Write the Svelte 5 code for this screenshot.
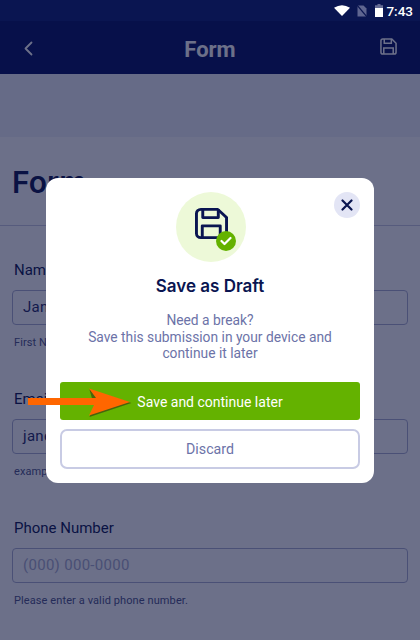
<script>
  const fields = [
    { label: 'Name', value: 'Jane', help: 'First Name' },
    { label: 'Email', value: 'jane@example.com', help: 'example@example.com' },
    { label: 'Phone Number', placeholder: '(000) 000-0000', help: 'Please enter a valid phone number.' }
  ];
</script>

<div class="screen">
  <div class="status">
    <svg width="16" height="11" viewBox="0 0 16 11"><path d="M0 2.8 Q8 -2.4 16 2.8 L8 11Z" fill="#fff"/></svg>
    <svg class="sim" width="10" height="12" viewBox="0 0 10 12"><path d="M0.5 0.5H6.5L9.5 3.5V11.5H0.5Z" fill="#5f6590"/><path d="M0 0L10 12" stroke="#0a1551" stroke-width="1.2"/></svg>
    <svg class="bat" width="8" height="13" viewBox="0 0 8 13"><path d="M2.5 0H5.5V1.2H8V4H0V1.2H2.5Z" fill="#666c95"/><rect y="4" width="8" height="9" fill="#fff"/></svg>
    <span class="time">7:43</span>
  </div>
  <div class="app">
    <header>
      <svg width="12" height="16" viewBox="0 0 12 16" fill="none"><path d="M9.5 2.5L3.5 8.5L9.5 14.5" stroke="#fff" stroke-width="1.8" stroke-linecap="round" stroke-linejoin="round"/></svg>
      <span class="head-title">Form</span>
      <svg class="head-save" width="17" height="17" viewBox="0 0 18 18" fill="none" stroke="#fff" stroke-width="1.6"><path d="M3 1H12.5L17 5.5V15A2 2 0 0 1 15 17H3A2 2 0 0 1 1 15V3A2 2 0 0 1 3 1Z"/><path d="M4.5 1V5.5H12V1M4 17V10.5H14V17"/></svg>
    </header>
    <div class="band"></div>
    <main>
      <h1>Form</h1>
      <div class="fields">
        {#each fields as f}
          <div class="field">
            <span class="label">{f.label}</span>
            <div class="input" class:placeholder={f.placeholder}>{f.value ?? f.placeholder}</div>
            <span class="help">{f.help}</span>
          </div>
        {/each}
      </div>
    </main>
    <div class="overlay">
      <div class="modal">
        <button class="close" aria-label="Close">
          <svg width="12" height="12" viewBox="0 0 12 12"><path d="M1.5 1.5L10.5 10.5M10.5 1.5L1.5 10.5" stroke="#0a1551" stroke-width="2.2" stroke-linecap="round"/></svg>
        </button>
        <div class="badge">
          <svg width="33" height="31" viewBox="0 0 34 34" preserveAspectRatio="none" fill="none" stroke="#0a1551" stroke-width="3" stroke-linejoin="round"><path d="M6 1.5H23.5L32.5 10.5V28A4.5 4.5 0 0 1 28 32.5H6A4.5 4.5 0 0 1 1.5 28V6A4.5 4.5 0 0 1 6 1.5Z"/><path d="M8 1.5V10.5H24V1.5M7.5 32.5V19.5H26V32.5"/></svg>
          <span class="tick">
            <svg width="12" height="10" viewBox="0 0 12 10" fill="none"><path d="M1.5 5L4.5 8L10.5 2" stroke="#fff" stroke-width="2.2" stroke-linecap="round" stroke-linejoin="round"/></svg>
          </span>
        </div>
        <h2>Save as Draft</h2>
        <p>Need a break?<br />Save this submission in your device and continue it later</p>
        <button class="primary">Save and continue later</button>
        <button class="secondary">Discard</button>
      </div>
      <svg class="arrow" width="104" height="30" viewBox="0 0 104 30"><path d="M61 1L103 14.5L61 28.5L66 18Z" fill="#3d4a10" opacity="0.75" transform="translate(0.4 0.6)"/><path d="M0 10H68L61 0.5L102 14L61 27.5L66 17H0Z" fill="#ff6600"/></svg>
    </div>
  </div>
</div>

<style>
  :global(body) { margin: 0; }
  .screen {
    width: 420px; height: 640px; overflow: hidden;
    display: flex; flex-direction: column;
    font-family: Roboto, "Liberation Sans", sans-serif;
  }
  .status {
    height: 21px; flex: none; background: #0a1551;
    display: flex; align-items: center; justify-content: flex-end;
    padding-right: 7px; gap: 0; color: #fff;
  }
  .sim { margin-left: 7px; }
  .bat { margin-left: 8px; }
  .time { margin-left: 3px; font-size: 13.5px; font-weight: 500; }
  .app { flex: 1; position: relative; display: flex; flex-direction: column; background: #fff; }
  header {
    height: 53px; flex: none; background: #030f62; color: #fff;
    display: flex; align-items: center; justify-content: space-between;
    padding: 0 23px 0 22px;
  }
  .head-title { font-size: 22px; line-height: 26px; font-weight: 700; margin-left: 6px; padding-top: 5px; }
  .head-save { margin-bottom: 2px; }
  .band { height: 63px; flex: none; background: #f0f2fa; }
  main { flex: 1; }
  h1 {
    margin: 0; height: 89px; box-sizing: border-box; border-bottom: 1px solid #c8cbe0;
    padding: 24px 12px 0; font-family: Inter, sans-serif;
    font-size: 30px; line-height: 42px; font-weight: 600; color: #0a1551;
  }
  .fields { display: flex; flex-direction: column; gap: 36px; padding: 34px 12px 0; }
  .field { display: flex; flex-direction: column; height: 93px; }
  .label { padding-left: 2px; font-size: 15px; line-height: 20px; height: 30px; flex: none; color: #0a1551; }
  .input {
    height: 35px; flex: none; box-sizing: border-box; border: 1px solid #aab0d0; border-radius: 4px;
    padding: 0 10px; font-size: 15px; line-height: 33px; color: #1f2a66;
    letter-spacing: 0.3px; background: #fff;
  }
  .input.placeholder { color: #a8adcc; }
  .help { padding-left: 2px; margin-top: 11px; font-size: 11px; line-height: 14px; letter-spacing: 0.1px; color: #4c5385; }
  .overlay {
    position: absolute; inset: 0; background: rgba(10, 17, 58, 0.6);
    display: flex; align-items: center; justify-content: center;
  }
  .modal {
    position: relative; width: 328px; box-sizing: border-box; background: #fff;
    border-radius: 12px; padding: 14px;
    display: flex; flex-direction: column; align-items: center;
  }
  .close {
    position: absolute; top: 14px; right: 14px; width: 26px; height: 26px; padding: 0;
    border: 0; border-radius: 50%; background: #e3e5f5;
    display: flex; align-items: center; justify-content: center;
  }
  .badge {
    position: relative; width: 70px; height: 70px; box-sizing: border-box; padding-bottom: 8px;
    margin-left: 2px; border-radius: 50%; background: #edf9d8;
    display: flex; align-items: center; justify-content: center;
  }
  .tick {
    position: absolute; left: 40px; top: 39px; width: 20px; height: 20px; border-radius: 50%;
    background: #64b200; display: flex; align-items: center; justify-content: center;
  }
  h2 { margin: 13px 0 0; font-size: 17px; line-height: 22px; color: #0a1551; font-family: Inter, sans-serif; font-weight: 600; }
  p { margin: 15px 0 0; width: 270px; text-align: center; font-size: 13.8px; line-height: 16.33px; color: #6c73a8; }
  button { font-family: inherit; }
  .primary {
    margin-top: 20.5px; width: 100%; height: 38px; border: 0; border-radius: 3px; padding: 2px 0 0 0;
    background: #64b200; color: #fff; font-size: 14px;
  }
  .secondary {
    margin-top: 9px; width: 100%; height: 40px; border: 2px solid #c8cbe4; border-radius: 7px;
    background: #fff; color: #6c73a8; font-size: 14.2px;
  }
  .arrow { position: absolute; left: 28px; top: 367px; }
</style>
